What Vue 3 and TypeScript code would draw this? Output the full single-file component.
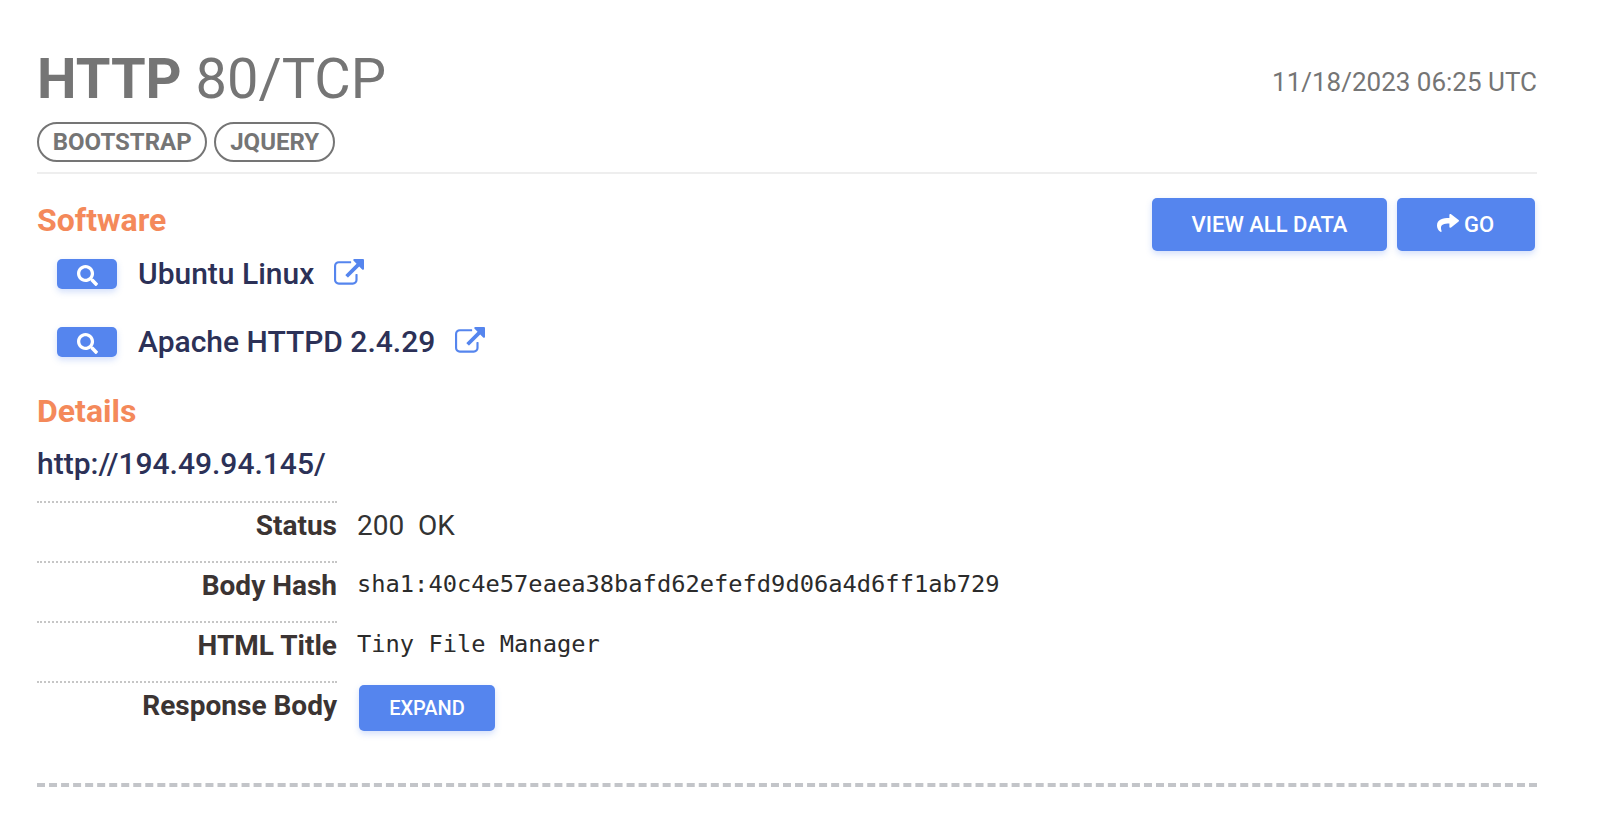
<script setup lang="ts">
const tags: string[] = ['BOOTSTRAP', 'JQUERY']
const software: string[] = ['Ubuntu Linux', 'Apache HTTPD 2.4.29']
const statusText: string = '200\u00a0\u00a0OK'
</script>

<template>
  <div class="page">
    <header class="head">
      <div class="head-top">
        <h1 class="title"><b>HTTP</b> 80/TCP</h1>
        <span class="date">11/18/2023 06:25 UTC</span>
      </div>
      <div class="tags">
        <span v-for="t in tags" :key="t" class="tag">{{ t }}</span>
      </div>
    </header>

    <section class="software">
      <div class="actions">
        <a class="btn btn-lg view">VIEW ALL DATA</a>
        <a class="btn btn-lg go">
          <svg class="go-icon" viewBox="0 32 512 464" preserveAspectRatio="none"><path fill="currentColor" d="M503.7 226.2l-176 151.98c-15.4 13.3-39.7 2.5-39.7-18.2v-80.06C127.4 281.8 60.2 320.8 107.5 472c5.2 16.8-15 29.8-29.2 19.5C32.8 458.4 0 395.7 0 332.4c0-158.4 133.6-192.4 288-194.2V56c0-20.7 24.3-31.5 39.7-18.2l176 152c11.1 9.6 11.1 26.8 0 36.4z"/></svg>
          GO
        </a>
      </div>
      <h2 class="sec-title">Software</h2>
      <div v-for="s in software" :key="s" class="sw-row">
        <a class="btn btn-search">
          <svg class="search-icon" viewBox="0 0 512 512"><path fill="currentColor" d="M505 442.7L405.3 343c-4.5-4.5-10.6-7-17-7H372c27.6-35.3 44-79.7 44-128C416 93.1 322.9 0 208 0S0 93.1 0 208s93.1 208 208 208c48.3 0 92.7-16.4 128-44v16.3c0 6.4 2.5 12.5 7 17l99.7 99.7c9.4 9.4 24.6 9.4 33.9 0l28.3-28.3c9.4-9.4 9.4-24.6.1-34zM208 336c-70.7 0-128-57.2-128-128 0-70.7 57.2-128 128-128 70.7 0 128 57.2 128 128 0 70.7-57.2 128-128 128z"/></svg>
        </a>
        <span class="sw-name">{{ s }}</span>
        <svg class="ext-icon" viewBox="0 0 1792 1792"><path fill="currentColor" d="M1408 928v320q0 119-84.5 203.5t-203.5 84.5h-832q-119 0-203.5-84.5t-84.5-203.5v-832q0-119 84.5-203.5t203.5-84.5h704q14 0 23 9t9 23v64q0 14-9 23t-23 9h-704q-66 0-113 47t-47 113v832q0 66 47 113t113 47h832q66 0 113-47t47-113v-320q0-14 9-23t23-9h64q14 0 23 9t9 23zm384-864v512q0 26-19 45t-45 19-45-19l-176-176-652 652q-10 10-23 10t-23-10l-114-114q-10-10-10-23t10-23l652-652-176-176q-19-19-19-45t19-45 45-19h512q26 0 45 19t19 45z"/></svg>
      </div>
    </section>

    <section class="details">
      <h2 class="sec-title">Details</h2>
      <div class="url">http://194.49.94.145/</div>
      <div class="row">
        <div class="label">Status</div>
        <div class="value status">{{ statusText }}</div>
      </div>
      <div class="row">
        <div class="label">Body Hash</div>
        <div class="value mono">sha1:40c4e57eaea38bafd62efefd9d06a4d6ff1ab729</div>
      </div>
      <div class="row">
        <div class="label">HTML Title</div>
        <div class="value mono">Tiny File Manager</div>
      </div>
      <div class="row">
        <div class="label">Response Body</div>
        <div class="value"><a class="btn expand">EXPAND</a></div>
      </div>
    </section>

    <div class="end"></div>
  </div>
</template>

<style>
html, body { margin: 0; background: #fff; }
</style>

<style scoped>
.page {
  box-sizing: border-box;
  width: 1616px;
  height: 815px;
  overflow: hidden;
  padding: 39px 79px 0 37px;
  font-family: Roboto, "Liberation Sans", sans-serif;
  color: #2c3157;
}
.head { border-bottom: 2px solid #eeeeee; padding-bottom: 10px; }
.head-top { display: flex; justify-content: space-between; align-items: flex-start; height: 83px; }
.title { margin: 0; font-size: 56px; line-height: 80px; font-weight: 400; color: #757575; }
.title b { font-weight: 700; }
.date { font-size: 26px; line-height: 30px; margin-top: 28px; color: #757575; }
.tags { display: flex; gap: 7px; }
.tag {
  box-sizing: border-box; height: 40px; padding: 0 13.75px;
  border: 2px solid #757575; border-radius: 20px;
  display: flex; align-items: center;
  font-size: 24px; font-weight: 700; color: #757575;
}
.software { padding-top: 28px; }
.actions { float: right; display: flex; gap: 10px; margin: -4px 2px 0 0; }
.btn {
  display: inline-flex; align-items: center; justify-content: center; box-sizing: border-box;
  background: #5585ee; color: #fff; border-radius: 5px;
  box-shadow: 0 3px 6px rgba(85, 133, 238, 0.25);
}
.btn-lg { height: 53px; font-size: 22px; font-weight: 500; padding-bottom: 1px; }
.view { width: 235px; }
.go { width: 138px; gap: 5px; padding-right: 1px; }
.go-icon { width: 22px; height: 18px; margin-bottom: 3px; }
.sec-title { margin: 0; font-size: 32px; line-height: 36px; font-weight: 700; color: #f4895a; }
.sw-row { display: flex; align-items: center; height: 30px; margin: 0 0 38px 20px; }
.software .sec-title { margin-bottom: 21px; }
.btn-search { width: 60px; height: 30px; }
.search-icon { width: 21px; height: 21px; margin-top: 3px; }
.sw-name { margin-left: 21px; font-size: 30px; font-weight: 500; line-height: 36px; }
.ext-icon { width: 30px; height: 30px; margin-left: 20px; color: #5585ee; }
.details .sec-title { margin-top: -2px; }
.url { font-size: 30px; font-weight: 500; line-height: 36px; margin: 17px 0 19px; }
.row { display: flex; height: 60px; }
.label {
  box-sizing: border-box; width: 300px; height: 60px; padding-top: 7px;
  border-top: 2px dotted #c6c6c6;
  text-align: right; font-size: 28px; line-height: 32px; font-weight: 700; color: #3b3433;
}
.value { margin-left: 20px; padding-top: 9px; font-size: 28px; line-height: 32px; color: #333; }
.status { white-space: pre; }
.value.mono { font-family: "DejaVu Sans Mono", monospace; font-size: 23.72px; padding-top: 7px; color: #2b2b2b; }
.expand { width: 136px; height: 46px; margin: -6px 0 0 2px; font-size: 20px; font-weight: 500; }
.end { margin-top: 42px; border-top: 4px dashed #c3c5c9; }
</style>
